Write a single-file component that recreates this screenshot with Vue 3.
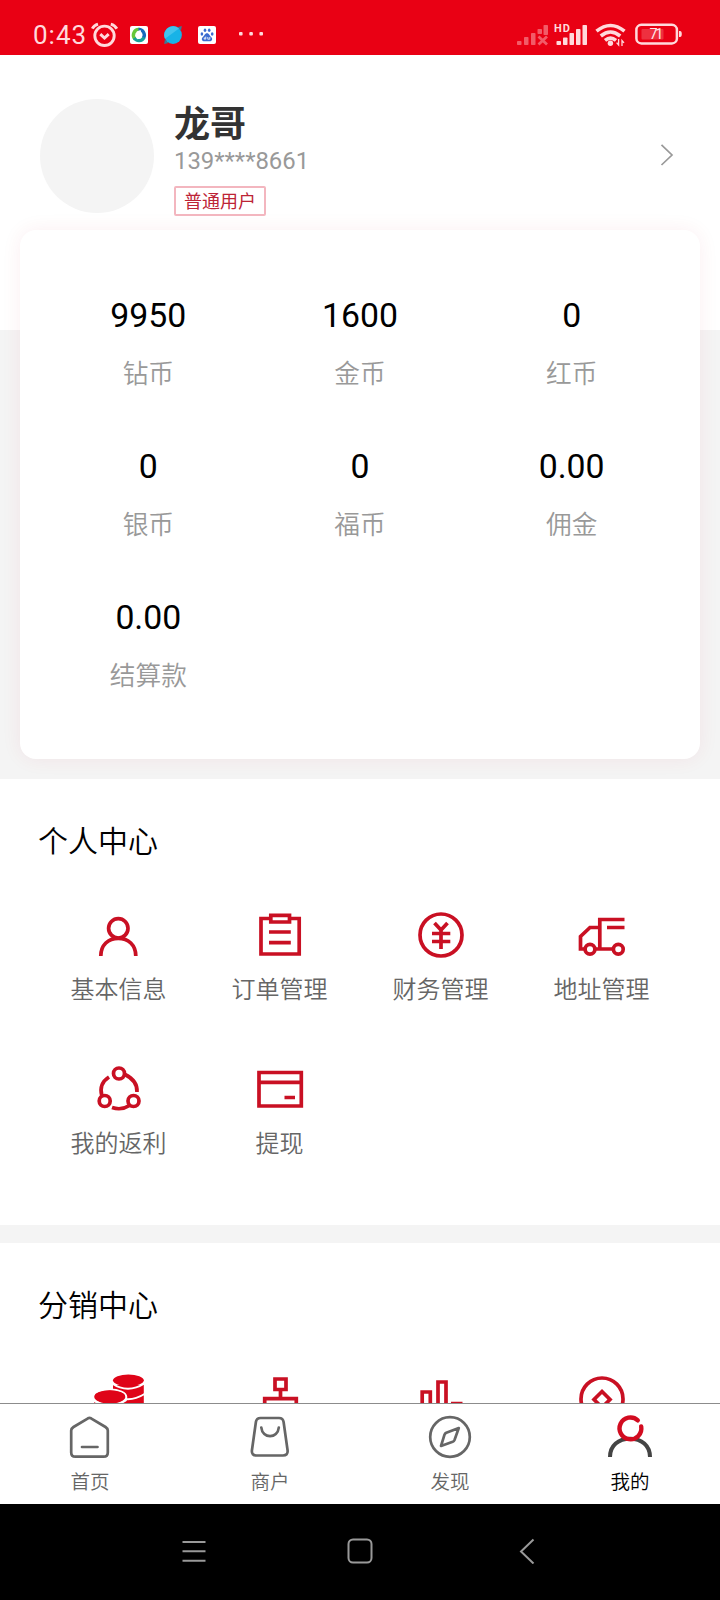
<script setup>
const stats = [
  { value: '9950', label: '钻币' },
  { value: '1600', label: '金币' },
  { value: '0', label: '红币' },
  { value: '0', label: '银币' },
  { value: '0', label: '福币' },
  { value: '0.00', label: '佣金' },
  { value: '0.00', label: '结算款' },
]
const personal = [
  { icon: 'user', label: '基本信息' },
  { icon: 'order', label: '订单管理' },
  { icon: 'finance', label: '财务管理' },
  { icon: 'truck', label: '地址管理' },
  { icon: 'share', label: '我的返利' },
  { icon: 'card', label: '提现' },
]
const resale = ['coins', 'team', 'chart', 'coin']
const tabs = [
  { icon: 'home', label: '首页' },
  { icon: 'shop', label: '商户' },
  { icon: 'find', label: '发现' },
  { icon: 'mine', label: '我的', active: true },
]
</script>

<template>
  <div class="screen">
    <header class="status">
      <div class="status-left">
        <span class="time">0:43</span>
        <svg class="alarm" width="28" height="26" viewBox="90 21.500 28 26" fill="none" stroke="#ffd9dc" stroke-width="2.900">
          <circle cx="104.500" cy="35.300" r="9.700" />
          <path d="M92.300 28.200Q94 24.800 98 23.600M110.800 23.600Q115 24.800 116.800 28.200M100.300 33.600l4.200 4 4.200-4" />
        </svg>
        <svg width="18" height="18" viewBox="0 0 18 18">
          <rect width="18" height="18" rx="2" fill="#fff" />
          <path d="M9.500 3.500A5.600 5.600 0 0 0 5 13" fill="none" stroke="#65c83a" stroke-width="3.400" />
          <path d="M8.500 3.500A5.600 5.600 0 0 1 13.500 12" fill="none" stroke="#1769bd" stroke-width="3.400" />
          <path d="M4.200 12A5.600 5.600 0 0 0 14 11.500" fill="none" stroke="#16a09a" stroke-width="3.200" />
          <path d="M7 6.200l3-1.200 1 3M11 11.600l-3 .8-1-3" fill="none" stroke="#fff" stroke-width="1.600" />
        </svg>
        <svg width="18" height="18" viewBox="0 0 18 18">
          <path d="M13.500 1.200L17.800 0l-.8 4.600zM4.500 17L.2 18l.7-4.600z" fill="#347d9a" />
          <circle cx="9" cy="9" r="8.900" fill="#18b3e7" />
          <path d="M1 12.800A8.900 8.900 0 0 1 15 2.500z" fill="#43c3ed" />
        </svg>
        <svg width="18" height="18" viewBox="0 0 18 18">
          <rect width="18" height="18" rx="2" fill="#fff" />
          <g fill="#3b6bd0">
            <ellipse cx="3.900" cy="8" rx="1.300" ry="1.700" />
            <ellipse cx="7" cy="4.300" rx="1.300" ry="1.800" />
            <ellipse cx="11.200" cy="4.300" rx="1.300" ry="1.800" />
            <ellipse cx="14.200" cy="8" rx="1.300" ry="1.700" />
            <path d="M9 7.300C11.300 7.300 11.600 10 13.400 11.200C15.200 13 13.600 15.600 11.200 15.200H6.800C4.400 15.600 2.800 13 4.600 11.200C6.400 10 6.700 7.300 9 7.300Z" />
          </g>
          <path d="M7.800 10.500v2.600h-1.600v-1.200h1.600M9.800 11v2.200h2V11" fill="none" stroke="#fff" stroke-width=".8" />
        </svg>
        <svg class="dots" width="26" height="6" viewBox="0 0 26 6" fill="#ffd9dc">
          <rect x="0" y="0" width="3.600" height="3.600" rx="1" />
          <rect x="10.300" y="0" width="3.600" height="3.600" rx="1" />
          <rect x="20.400" y="0" width="3.600" height="3.600" rx="1" />
        </svg>
      </div>
      <svg class="status-right" width="168" height="26" viewBox="516 22 168 26" fill="#ffd9dc">
        <g opacity=".42">
          <rect x="517" y="41" width="4.500" height="4" rx=".8" />
          <rect x="524" y="37" width="4.500" height="8" rx=".8" />
          <rect x="531" y="33" width="4.500" height="12" rx=".8" />
          <rect x="537.500" y="29" width="4.500" height="5" rx=".8" />
          <rect x="543.500" y="25" width="4.500" height="10" rx=".8" />
          <path d="M538.500 36.500l8.500 8M547 36.500l-8.500 8" stroke="#ffd9dc" stroke-width="2.800" />
        </g>
        <text x="554" y="32" font-size="11" font-weight="700" textLength="16" font-family="Roboto, sans-serif">HD</text>
        <rect x="556.500" y="41" width="4.500" height="4" rx=".8" />
        <rect x="563" y="37.500" width="4.500" height="7.500" rx=".8" />
        <rect x="569.500" y="33" width="4.500" height="12" rx=".8" />
        <rect x="576" y="29" width="4.500" height="16" rx=".8" />
        <rect x="582.500" y="25" width="4.500" height="20" rx=".8" />
        <g fill="none" stroke="#ffd9dc" stroke-width="3.600">
          <path d="M596.500 31.200Q610.500 19.800 624.500 31.200" />
          <path d="M600.800 36Q610.500 28 620.200 36" />
          <path d="M605 40.400Q610.500 36 616 40.400" />
        </g>
        <circle cx="610.400" cy="43.300" r="2.700" />
        <path d="M618.600 39v6l-2-2.400M622 46v-5.500l2 2.400" fill="none" stroke="#ffd9dc" stroke-width="1.300" />
        <rect x="636.400" y="24.800" width="40.500" height="18.600" rx="5" fill="none" stroke="#ffd9dc" stroke-width="2.500" />
        <rect x="641.500" y="29" width="22" height="10.500" rx="1" opacity=".22" />
        <path d="M679 31h1q1.800 0 1.800 3t-1.800 3h-1z" />
        <text x="649.500" y="39" font-size="14.500" textLength="14" font-family="Roboto, sans-serif" fill="#ffe6e8">71</text>
      </svg>
    </header>

    <main class="content">
      <section class="profile">
        <div class="avatar"></div>
        <div class="who">
          <div class="name">龙哥</div>
          <div class="phone">139****8661</div>
          <div class="tag">普通用户</div>
        </div>
        <svg class="arrow" width="14" height="22" viewBox="0 0 14 22" fill="none" stroke="#999" stroke-width="1.700">
          <path d="M1.500 .8L12 11L1.500 21" />
        </svg>
      </section>

      <section class="wallet">
        <div class="card">
          <div v-for="s in stats" :key="s.label" class="stat">
            <div class="value">{{ s.value }}</div>
            <div class="label">{{ s.label }}</div>
          </div>
        </div>
      </section>

      <section class="panel">
        <h2>个人中心</h2>
        <div class="menu">
          <div v-for="p in personal" :key="p.label" class="entry">
            <svg v-if="p.icon === 'user'" class="ico" viewBox="95 911 48 48">
              <circle cx="118.300" cy="928.300" r="9.700" />
              <path d="M100.800 956c0-11 7.500-17.700 17.500-17.700s17.500 6.700 17.500 17.700" />
            </svg>
            <svg v-else-if="p.icon === 'order'" class="ico" viewBox="256 911 48 48">
              <path d="M269.500 918.500H261v35.500h38.200v-35.500h-8.500M270.800 915.300h18.700v6.700h-18.700zM269 932h21.800M269 942.700h21.800" />
            </svg>
            <svg v-else-if="p.icon === 'finance'" class="ico" viewBox="417 911 48 48">
              <circle cx="441" cy="935" r="21" />
              <path d="M434.500 923l6.500 7 6.500-7M432 933.500h18.300M432 941.500h18.300M441 930v19" />
            </svg>
            <svg v-else-if="p.icon === 'truck'" class="ico" viewBox="578 911 48 48">
              <path d="M624.500 919.500h-24.700V949M607 927.500h17.500M599.500 927.500h-9.500l-9.500 9V949h4.500M595.500 949h17" />
              <circle cx="590" cy="949.300" r="4.900" />
              <circle cx="618.300" cy="949.300" r="4.900" />
            </svg>
            <svg v-else-if="p.icon === 'share'" class="ico" viewBox="95 1065 48 48">
              <circle cx="119" cy="1073.500" r="5.500" />
              <circle cx="104.700" cy="1101" r="5.500" />
              <circle cx="133.500" cy="1101" r="5.500" />
              <path d="M109 1077c-7 4.500-9.200 11-7.200 18.500M125 1074.500c8 4 12.500 10 12 17.500M112 1107.500c6.500 2.300 12 1.500 17.500-2" />
            </svg>
            <svg v-else class="ico" viewBox="256 1065 48 48">
              <path d="M259 1072.500h42.300v33.500H259zM259 1082.300h42.300M284.500 1097.500h10.500" />
            </svg>
            <span>{{ p.label }}</span>
          </div>
        </div>
      </section>

      <section class="panel second">
        <h2>分销中心</h2>
        <div class="menu">
          <div v-for="r in resale" :key="r" class="entry">
            <svg v-if="r === 'coins'" class="ico wide" viewBox="93 1374 52 50">
              <path class="solid" d="M113 1385v31q15.500 9 30.800 0v-31z" />
              <path class="gap" d="M112 1383.500q15.700 10.500 32.500 0M112 1394q15.700 10.500 32.500 0" />
              <ellipse class="solid" cx="128.400" cy="1380.300" rx="15.400" ry="5.800" />
              <ellipse class="solid gap" cx="109.800" cy="1397" rx="16.500" ry="7.600" />
              <path class="solid" d="M94.200 1402q15.500 7 31 0v14h-31z" />
              <path class="gap" d="M93 1400q16.500 10.500 33.500 0" />
              <ellipse class="solid" cx="109.800" cy="1396" rx="15.200" ry="5.700" />
            </svg>
            <svg v-else-if="r === 'team'" class="ico" viewBox="256 1375 48 48">
              <path d="M275 1379h11v10.500h-11zM280.500 1390v7.500M264.700 1412v-13.300h31.600V1412" />
            </svg>
            <svg v-else-if="r === 'chart'" class="ico" viewBox="417 1375 48 48">
              <path d="M422.200 1420v-28h8.100v28M438 1420v-38h8v38M451 1403.500h11.500" />
            </svg>
            <svg v-else class="ico" viewBox="578 1375 48 48">
              <circle cx="602" cy="1399" r="21" />
              <path d="M602 1391.500l8 8-8 8-8-8z" />
            </svg>
          </div>
        </div>
      </section>
    </main>

    <nav class="tabs">
      <div v-for="t in tabs" :key="t.label" class="tab" :class="{ active: t.active }">
        <svg v-if="t.icon === 'home'" class="tabico" viewBox="66 1413 48 48">
          <path d="M88 1418.300q1.500-.8 3 0L105.500 1427q2.300 1.500 2.300 3.500v22q0 4.200-4.200 4.200H75.400q-4.200 0-4.200-4.200v-22q0-2 2.300-3.500zM82 1447h15.500" />
        </svg>
        <svg v-else-if="t.icon === 'shop'" class="tabico" viewBox="246 1413 48 48">
          <path d="M260.500 1418h18.500q4 0 4.600 4l4 28.500q.4 5-4.600 5h-26.500q-5 0-4.600-5l4-28.500q.6-4 4.600-4zM261.300 1427.500c1 11.500 16.500 11.500 17.500 0" />
        </svg>
        <svg v-else-if="t.icon === 'find'" class="tabico" viewBox="426 1413 48 48">
          <circle cx="450" cy="1437" r="19.800" />
          <path d="M458.800 1428l-12.500 4.800q-1.300.6-1.800 1.900l-3.500 11.300 11.700-4.200q1.300-.5 1.800-1.800z" />
        </svg>
        <svg v-else class="tabico" viewBox="606 1413 48 48">
          <path class="dark" d="M610 1457c0-11.500 8.500-18.300 20-18.300s20 6.800 20 18.300" />
          <path class="red" d="M637.800 1420.300a10.900 10.900 0 1 0 3.400 6.200" />
        </svg>
        <span>{{ t.label }}</span>
      </div>
    </nav>

    <footer class="sysnav">
      <svg width="24" height="24" viewBox="0 0 24 24"><path d="M.5 3h23M.5 12.300h23M.5 21.700h23" /></svg>
      <svg class="homekey" width="26" height="26" viewBox="0 0 26 26"><rect x="1.500" y="1.500" width="23" height="23" rx="4.500" /></svg>
      <svg width="16" height="26" viewBox="0 0 16 26"><path d="M14.500 1.500L2 13.500l12.500 12" /></svg>
    </footer>
  </div>
</template>

<style>
body { margin: 0; }
</style>

<style scoped>
.screen {
  width: 720px;
  height: 1600px;
  display: flex;
  flex-direction: column;
  overflow: hidden;
  background: #fff;
  font-family: Roboto, "Noto Sans CJK SC", sans-serif;
}
svg { display: block; flex: none; }
.status {
  height: 55px;
  flex: none;
  box-sizing: border-box;
  padding: 14px 36px 0 33px;
  display: flex;
  justify-content: space-between;
  align-items: center;
  background: #e90014;
}
.status-left { display: flex; align-items: center; height: 40px; }
.time {
  width: 57px;
  font-size: 26px;
  letter-spacing: 1px;
  line-height: 40px;
  color: #ffd9dc;
}
.alarm { margin-right: 12px; }
.status-left svg + svg { margin-right: 16px; }
.status-left svg.dots { margin: 0 0 0 7px; }
.content { flex: 1; min-height: 0; overflow: hidden; }
.profile {
  height: 175px;
  box-sizing: border-box;
  padding: 44px 46px 0 40px;
  display: flex;
  align-items: flex-start;
}
.avatar { width: 114px; height: 114px; border-radius: 50%; background: #f4f4f4; }
.who { margin-left: 20px; flex: 1; }
.name { padding-top: 4px; font-size: 36px; line-height: 44px; font-weight: 700; color: #333; }
.phone { margin-top: -1px; font-size: 23.900px; line-height: 30px; color: #999; }
.tag {
  width: 92px;
  height: 30px;
  margin-top: 10px;
  box-sizing: border-box;
  border: 2px solid #f3b6bf;
  border-radius: 2px;
  text-align: center;
  font-size: 18px;
  line-height: 28px;
  color: #bd2436;
}
.arrow { margin-top: 45px; }
.wallet {
  height: 549px;
  box-sizing: border-box;
  padding: 0 20px 20px;
  background: linear-gradient(#fff 100px, #f4f4f4 100px);
}
.card {
  height: 529px;
  box-sizing: border-box;
  padding: 61px 22.500px 0;
  border-radius: 16px;
  background: #fff;
  box-shadow: 0 0 20px rgba(200, 20, 50, .07);
  display: grid;
  grid-template-columns: repeat(3, 1fr);
  grid-auto-rows: 151px;
}
.stat { text-align: center; }
.value { font-size: 33.800px; line-height: 50px; color: #000; }
.label { margin-top: 14px; font-size: 25.700px; line-height: 38px; font-weight: 350; color: #999; }
.panel {
  height: 446px;
  box-sizing: border-box;
  padding: 43px 38px 0;
  background: #fff;
}
.second { border-top: 18px solid #f4f4f4; height: 464px; }
h2 { margin: 0; font-size: 30px; line-height: 40px; font-weight: 350; color: #000; }
.menu {
  margin-top: 49px;
  display: grid;
  grid-template-columns: repeat(4, 1fr);
  grid-auto-rows: 154px;
}
.entry { display: flex; flex-direction: column; align-items: center; }
.entry span { margin-top: 13px; font-size: 24px; line-height: 36px; font-weight: 350; color: #666; }
.ico { width: 48px; height: 48px; fill: none; stroke: #c91023; stroke-width: 3.700; }
.wide { width: 52px; height: 50px; margin-top: -1px; }
.solid { fill: #df0418; stroke: none; }
.gap { stroke: #fff; stroke-width: 2; }
.tabs {
  height: 101px;
  flex: none;
  box-sizing: border-box;
  border-top: 1px solid #8c8c8c;
  display: grid;
  grid-template-columns: repeat(4, 1fr);
  background: #fff;
}
.tab {
  display: flex;
  flex-direction: column;
  align-items: center;
  padding-top: 9px;
  font-size: 19.500px;
  line-height: 28px;
  font-weight: 350;
  color: #666;
}
.tab span { margin-top: 8px; }
.active { color: #000; }
.tabico {
  width: 48px;
  height: 48px;
  fill: none;
  stroke: #666;
  stroke-width: 2.700;
  stroke-linecap: round;
  stroke-linejoin: round;
}
.dark { stroke: #444; stroke-width: 4; stroke-linecap: butt; }
.red { stroke: #d20c20; stroke-width: 4.400; }
.sysnav {
  height: 96px;
  flex: none;
  box-sizing: border-box;
  padding: 0 185px 2px 182px;
  display: flex;
  justify-content: space-between;
  align-items: center;
  background: #000;
}
.sysnav svg { fill: none; stroke: #999; stroke-width: 2; }
.sysnav svg.homekey { margin-right: 5px; }
</style>
